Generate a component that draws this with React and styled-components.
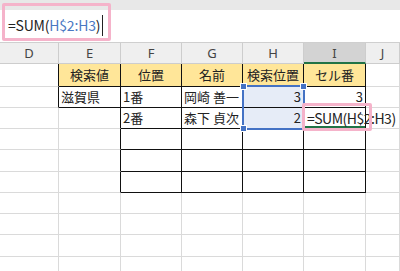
import React from 'react'
import styled, { createGlobalStyle } from 'styled-components'

const Global = createGlobalStyle`
  html, body { margin: 0; padding: 0; background: #fff; }
  body { font-family: "Noto Sans CJK JP", "Noto Sans", sans-serif; }
`

const Page = styled.div`
  position: relative;
  width: 400px;
  height: 271px;
  overflow: hidden;
  background: #fff;
`

const TopStrip = styled.div`
  height: 10px;
  background: #e8e8e8;
`

const FormulaBar = styled.div`
  height: 33px;
  box-sizing: border-box;
  display: flex;
  align-items: center;
  padding: 0 0 2px 8px;
  background: #fff;
  border-bottom: 1px solid #cfcfcf;
  font-size: 14px;
  letter-spacing: -0.2px;
  color: #222;
`

const Ref = styled.span`
  color: #4a78c2;
`

const Caret = styled.span`
  display: inline-block;
  width: 1px;
  height: 21px;
  margin-left: 2px;
  background: #222;
`

const Grid = styled.div`
  display: grid;
  grid-template-columns: 59px 62px 61px 61px 61px 62px 34px;
  grid-template-rows: 21px 23px 21px 21px 21px 22px 21px 21px 21px 22px 20px;
`

const Head = styled.div`
  box-sizing: border-box;
  display: flex;
  align-items: center;
  justify-content: center;
  background: ${p => (p.$active ? '#d3d3d3' : '#efefef')};
  border-right: 1px solid #cdcdcd;
  border-bottom: ${p => (p.$active ? '2px solid #217346' : '1px solid #cdcdcd')};
  font-family: "Noto Sans", sans-serif;
  font-size: 13px;
  color: #444;
`

const Cell = styled.div`
  box-sizing: border-box;
  display: flex;
  align-items: center;
  justify-content: ${p => p.$align || 'flex-start'};
  padding: 0 2px 1px 2px;
  white-space: nowrap;
  font-size: 13px;
  color: #222;
  background: ${p => (p.$head ? '#ffe699' : p.$sel ? '#e6ecf7' : '#fff')};
  border-right: 1px solid ${p => (p.$r ? '#111' : '#dadada')};
  border-bottom: 1px solid ${p => (p.$b ? '#111' : '#dadada')};
`

const EditCell = styled(Cell)`
  position: relative;
  z-index: 2;
  overflow: visible;
  justify-content: flex-start;
  font-size: 14px;
  letter-spacing: -0.5px;
  padding-left: 3px;
  box-shadow: inset 0 -2px 0 #217346;
  background: transparent;
`

const Selection = styled.div`
  position: absolute;
  left: 242px;
  top: 85px;
  width: 63px;
  height: 45px;
  box-sizing: border-box;
  border: 2px solid #4472c4;
  z-index: 3;
`

const Handle = styled.span`
  position: absolute;
  width: 5px;
  height: 5px;
  background: #4472c4;
  border: 1px solid #fff;
  ${p => (p.$top ? 'top: -4px;' : 'bottom: -4px;')}
  ${p => (p.$left ? 'left: -4px;' : 'right: -4px;')}
`

const Highlight = styled.div`
  position: absolute;
  box-sizing: border-box;
  border: 3px solid #f5b3ca;
  border-radius: 2px;
  z-index: 4;
  left: ${p => p.$x}px;
  top: ${p => p.$y}px;
  width: ${p => p.$w}px;
  height: ${p => p.$h}px;
`

const columns = ['D', 'E', 'F', 'G', 'H', 'I', 'J']

// rows of the sheet, columns D..J
const rows = [
  ['', '検索値', '位置', '名前', '検索位置', 'セル番', ''],
  ['', '滋賀県', '1番', '岡崎 善一', '3', '3', ''],
  ['', '', '2番', '森下 貞次', '2', '', ''],
  ['', '', '', '', '', '', ''],
  ['', '', '', '', '', '', ''],
  ['', '', '', '', '', '', ''],
  ['', '', '', '', '', '', ''],
  ['', '', '', '', '', '', ''],
  ['', '', '', '', '', '', ''],
  ['', '', '', '', '', '', ''],
]

const cellProps = (r, c) => {
  const tableRow = r < 6
  const p = {}
  // right borders: D for E box (rows 0-1), E..I for the main table
  if (c === 0 && r < 2) p.$r = true
  if (c >= 1 && c <= 5 && tableRow) p.$r = true
  // bottom borders
  if (c === 1 && r < 2) p.$b = true
  if (c >= 2 && c <= 5 && tableRow) p.$b = true
  if (r === 0 && c >= 1 && c <= 5) {
    p.$head = true
    p.$align = 'center'
  }
  if (r > 0 && (c === 4 || c === 5)) p.$align = 'flex-end'
  if (c === 4 && (r === 1 || r === 2)) p.$sel = true
  return p
}

export default function App() {
  return (
    <>
      <Global />
      <Page>
        <TopStrip />
        <FormulaBar>
          =SUM(<Ref>H$2:H3</Ref>)<Caret />
        </FormulaBar>
        <Grid>
          {columns.map(c => (
            <Head key={c} $active={c === 'I'}>{c}</Head>
          ))}
          {rows.map((row, r) =>
            row.map((v, c) =>
              r === 2 && c === 5 ? (
                <EditCell key={`${r}-${c}`} {...cellProps(r, c)}>=SUM(H$2:H3)</EditCell>
              ) : (
                <Cell key={`${r}-${c}`} {...cellProps(r, c)}>{v}</Cell>
              )
            )
          )}
        </Grid>
        <Selection>
          <Handle $top $left />
          <Handle $top />
          <Handle $left />
        </Selection>
        <Highlight $x={2} $y={3} $w={109} $h={38} />
        <Highlight $x={302} $y={103} $w={70} $h={28} />
      </Page>
    </>
  )
}
